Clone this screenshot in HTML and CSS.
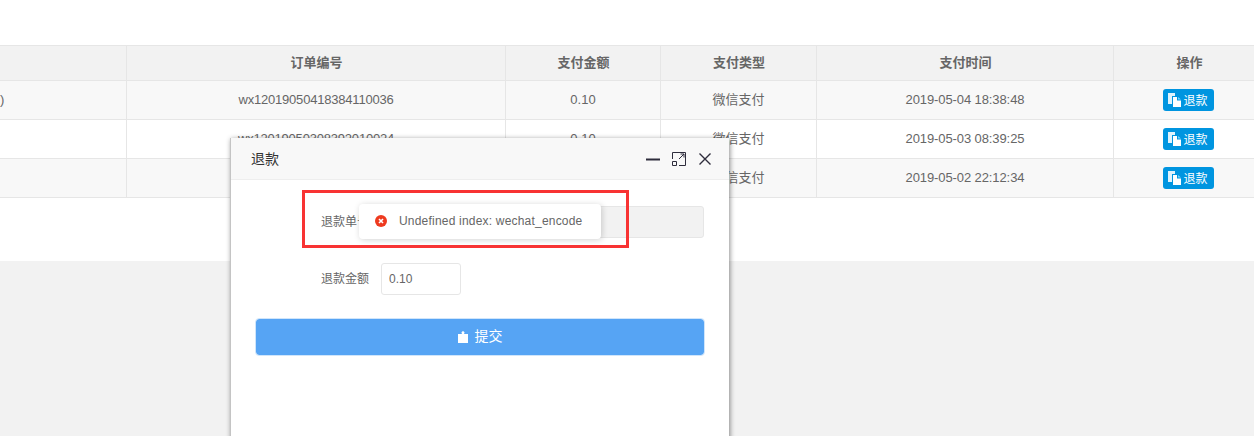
FILE: index.html
```html
<!DOCTYPE html>
<html lang="zh">
<head>
<meta charset="utf-8">
<title>退款</title>
<link rel="stylesheet" href="styles.css">
</head>
<body>
<div class="page">
  <div class="content">
    <table class="orders">
      <colgroup>
        <col class="c1"><col class="c2"><col class="c3"><col class="c4"><col class="c5"><col class="c6">
      </colgroup>
      <thead>
        <tr><th></th><th>订单编号</th><th>支付金额</th><th>支付类型</th><th>支付时间</th><th>操作</th></tr>
      </thead>
      <tbody>
        <tr>
          <td class="clip">)</td><td class="num">wx12019050418384110036</td><td class="amount">0.10</td><td>微信支付</td><td class="time">2019-05-04 18:38:48</td>
          <td class="act"><button class="refund"><svg class="doc" viewBox="0 0 13 14"><path class="b" d="M0 0h7v3H4v8H0z"/><path class="w" d="M5 4h4v3.500h4V14H5z"/><path class="c" d="M10 4l3 2.500h-3z"/></svg>退款</button></td>
        </tr>
        <tr>
          <td></td><td class="num">wx12019050308392010024</td><td class="amount">0.10</td><td>微信支付</td><td class="time">2019-05-03 08:39:25</td>
          <td class="act"><button class="refund"><svg class="doc" viewBox="0 0 13 14"><path class="b" d="M0 0h7v3H4v8H0z"/><path class="w" d="M5 4h4v3.500h4V14H5z"/><path class="c" d="M10 4l3 2.500h-3z"/></svg>退款</button></td>
        </tr>
        <tr>
          <td></td><td></td><td></td><td>微信支付</td><td class="time">2019-05-02 22:12:34</td>
          <td class="act"><button class="refund"><svg class="doc" viewBox="0 0 13 14"><path class="b" d="M0 0h7v3H4v8H0z"/><path class="w" d="M5 4h4v3.500h4V14H5z"/><path class="c" d="M10 4l3 2.500h-3z"/></svg>退款</button></td>
        </tr>
      </tbody>
    </table>
  </div>
  <div class="rest"></div>

  <section class="modal">
    <header class="modal-head">
      <span class="modal-title">退款</span>
      <div class="modal-tools">
        <svg class="tool" viewBox="0 0 16 16"><path d="M1 8.500h14" stroke-width="2"/></svg>
        <svg class="tool" viewBox="0 0 16 16"><path d="M1.500 8V1.500h13v13H8M8 8l5-5M9.500 3H13v3.500" stroke-width="1"/><path d="M1.500 10.500h4v4h-4z" stroke-width="1"/></svg>
        <svg class="tool" viewBox="0 0 16 16"><path d="M2.500 2.500l11 11M13.500 2.500l-11 11" stroke-width="1.400"/></svg>
      </div>
    </header>
    <form class="modal-body">
      <div class="field">
        <label class="label">退款单号</label>
        <input class="input wide" type="text" disabled>
      </div>
      <div class="field">
        <label class="label">退款金额</label>
        <input class="input short" type="text" value="0.10">
      </div>
      <button class="submit" type="button">
        <svg class="bag" viewBox="0 0 10 12"><path d="M0 3h3.800V1.500H3L5 0l2 1.500h-.8V3H10v9H0z"/></svg>
        <span class="submit-text">提交</span>
      </button>
    </form>
  </section>

  <div class="highlight"></div>

  <div class="toast">
    <svg class="toast-icon" viewBox="0 0 12 12"><circle cx="6" cy="6" r="6"/><path d="M4 4l4 4M8 4l-4 4"/></svg>
    <span class="toast-text">Undefined index: wechat_encode</span>
  </div>
</div>
</body>
</html>
```

FILE: styles.css
```css
* { box-sizing: border-box; }
html, body { margin: 0; padding: 0; height: 100%; overflow: hidden; background: #fff; }
body { font-family: "Liberation Sans", "Noto Sans CJK SC", sans-serif; color: #666; }

.page { position: relative; display: flex; flex-direction: column; height: 436px; overflow: hidden; }
.content { height: 261px; padding-top: 45px; background: #fff; }
.rest { flex: 1; background: #f2f2f2; }

.orders { width: 1264px; table-layout: fixed; border-collapse: separate; border-spacing: 0; border-top: 1px solid #e6e6e6; font-size: 13px; }
.c1 { width: 127px; } .c2 { width: 379px; } .c3 { width: 155px; } .c4 { width: 156px; } .c5 { width: 297px; } .c6 { width: 150px; }
.orders th, .orders td { padding: 0 0 3px; text-align: center; border-right: 1px solid #e6e6e6; border-bottom: 1px solid #e6e6e6; overflow: hidden; white-space: nowrap; }
.orders th:last-child, .orders td:last-child { border-right: 0; }
.orders th { height: 35px; padding-left: 1px; background: #f2f2f2; font-weight: 700; color: #666; }
.orders td { height: 39px; }
.orders tbody tr:nth-child(odd) td { background: #f8f8f8; }
.orders td.clip { text-align: left; padding-bottom: 1px; }
.orders td.num { letter-spacing: -.2px; padding-bottom: 1px; }
.orders td.amount { padding-bottom: 1px; }
.orders td.time { letter-spacing: -.1px; padding-bottom: 1px; }
.orders td.act { padding: 0 2px 0 0; }

.refund { display: inline-flex; align-items: center; justify-content: center; gap: 2px; width: 51px; height: 22px; margin: 0; padding: 0 0 1px; border: 0; border-radius: 3px; background: #0095e0; color: #fff; font: 12px "Liberation Sans", "Noto Sans CJK SC", sans-serif; vertical-align: middle; }
.doc { width: 13px; height: 14px; flex: none; }
.doc .w { fill: #fff; }
.doc .b { fill: #dff3fd; }
.doc .c { fill: #6fd4ff; }

.modal { position: absolute; left: 230px; top: 138px; width: 499px; height: 340px; background: #fff; border-left: 1px solid #c4c4c4; box-shadow: 1px 1px 5px rgba(0, 0, 0, .45); }
.modal-head { display: flex; align-items: center; justify-content: space-between; height: 42px; padding: 0 16px 2px 20px; background: #f8f8f8; border-bottom: 1px solid #eee; color: #333; font-size: 14px; }
.modal-tools { display: flex; align-items: center; gap: 10px; margin-bottom: -2px; }
.tool { width: 16px; height: 16px; fill: none; stroke: #2e2d3c; }

.modal-body { padding: 26px 24px 0; }
.field { display: flex; align-items: center; margin-bottom: 25px; }
.label { width: 126px; padding: 0 12px 3px 0; text-align: right; font-size: 12px; color: #666; }
.input { height: 32px; padding: 0 7px 1px; border: 1px solid #e6e6e6; border-radius: 3px; font: 12px "Liberation Sans", sans-serif; color: #666; background: #fff; }
.input.wide { width: 323px; background: #f2f2f2; }
.input.short { width: 80px; }

.submit { display: flex; align-items: center; justify-content: center; gap: 7px; width: 450px; height: 38px; margin: -2px 0 0; padding: 0; border: 1px solid #cfe5fb; border-radius: 4px; background: #56a4f4; background-clip: padding-box; color: #fff; font: 700 13px "Liberation Sans", "Noto Sans CJK SC", sans-serif; }
.submit-text { font-size: 14px; font-weight: 400; line-height: 20px; margin-top: -3px; }
.bag { width: 10px; height: 12px; fill: #fff; margin-top: -1px; }

.highlight { position: absolute; left: 302px; top: 190px; width: 327px; height: 58px; border: 3px solid #f83333; }

.toast { position: absolute; left: 359px; top: 204px; display: flex; align-items: center; gap: 12px; width: 242px; height: 35px; padding-left: 16px; background: #fff; border-radius: 4px; box-shadow: 1px 1px 6px rgba(0, 0, 0, .18); font-size: 12px; color: #666; white-space: nowrap; }
.toast-text { letter-spacing: .2px; margin-top: -2px; }
.toast-icon { width: 12px; height: 12px; flex: none; margin-top: -1px; }
.toast-icon circle { fill: #ee3a1f; }
.toast-icon path { fill: none; stroke: #fff; stroke-width: 1.6; }
```
